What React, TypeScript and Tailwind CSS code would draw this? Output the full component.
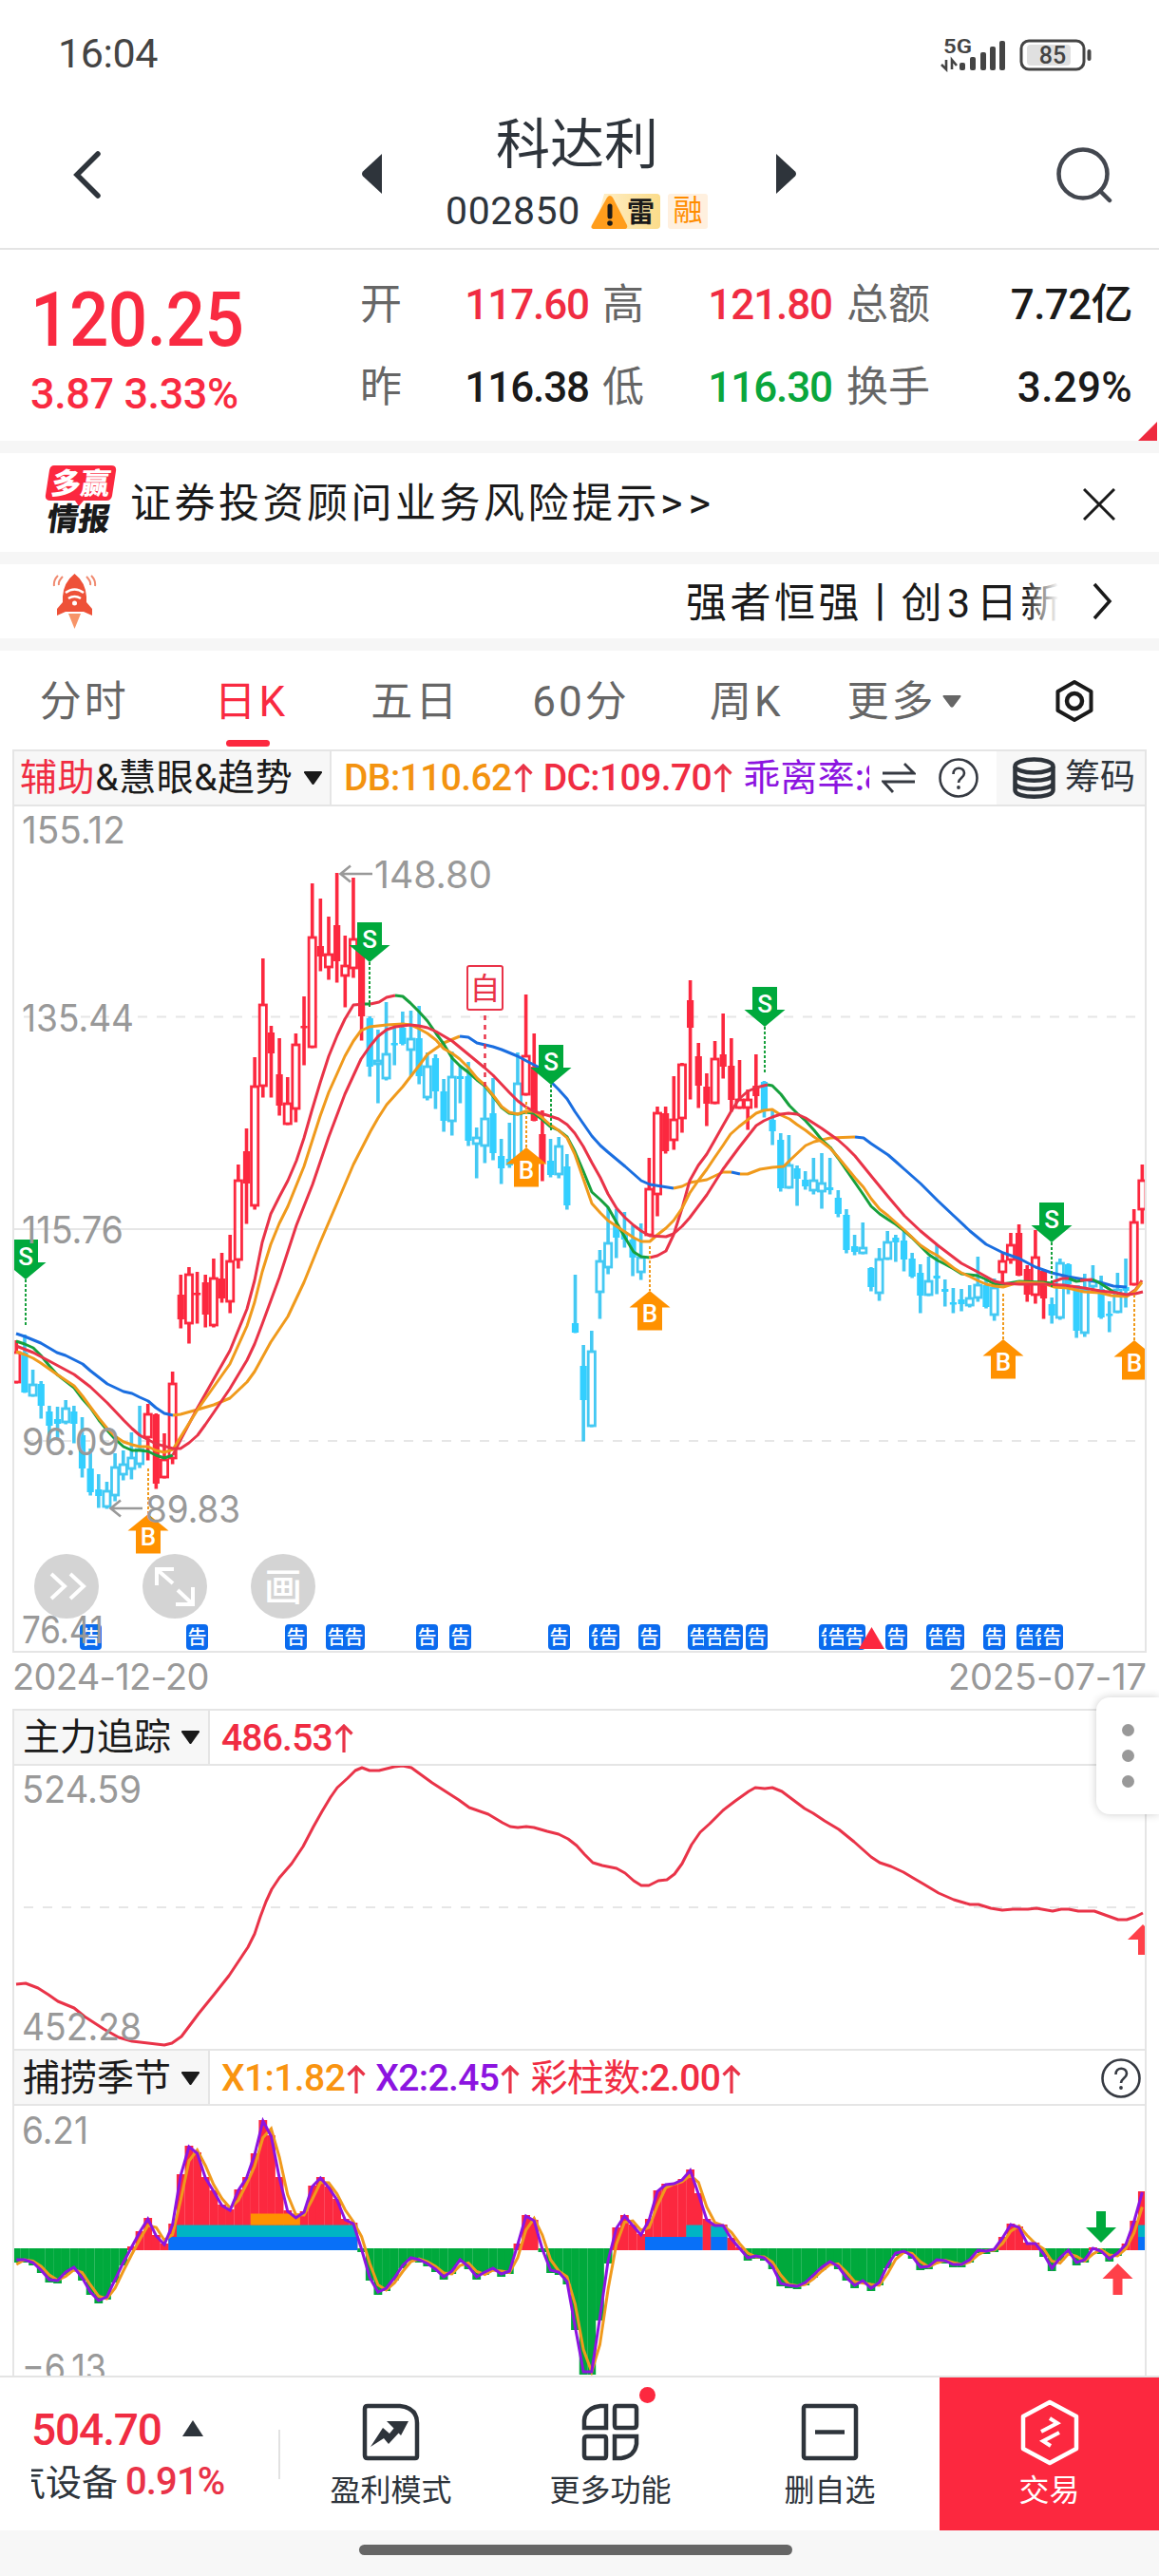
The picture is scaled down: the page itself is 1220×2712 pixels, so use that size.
import type { ReactNode } from "react";

const RED = "#fc283f";
const LINE_RED = "#e93348";
const GREEN = "#00a93c";
const LINE_GREEN = "#16a03c";
const ORANGE = "#ff9100";
const LINE_ORANGE = "#f09a1c";
const BLUE = "#1a6ee0";
const CYAN = "#33cfff";
const LINE_CYAN = "#44c9f3";
const GRID = "#e6e6e6";
const NUM_FONT = "Roboto, 'Noto Sans CJK SC', sans-serif";
const LABEL_FONT = "Inter, Roboto, sans-serif";
const CJK_FONT = "'Noto Sans CJK SC', sans-serif";

// R / r = red solid / hollow, C / c = cyan solid / hollow: [kind, high, top, bottom, low]
type Candle = [string, number, number, number, number];

const CANDLES: Candle[] = [
  ["r", 1411, 1423, 1456, 1456], ["C", 1405, 1424, 1466, 1466], ["c", 1442, 1457, 1470, 1470],
  ["C", 1454, 1457, 1480, 1493], ["C", 1480, 1486, 1501, 1516], ["C", 1481, 1494, 1499, 1515],
  ["c", 1474, 1482, 1498, 1499], ["C", 1480, 1486, 1499, 1519], ["C", 1492, 1511, 1546, 1555],
  ["C", 1525, 1546, 1571, 1574], ["C", 1552, 1568, 1575, 1587], ["c", 1560, 1569, 1587, 1588],
  ["c", 1530, 1544, 1575, 1580], ["c", 1527, 1541, 1553, 1558], ["c", 1508, 1534, 1547, 1557],
  ["c", 1480, 1525, 1542, 1545], ["r", 1478, 1488, 1514, 1537], ["R", 1488, 1489, 1562, 1567],
  ["r", 1509, 1536, 1556, 1556], ["r", 1444, 1456, 1536, 1541], ["R", 1342, 1363, 1389, 1398],
  ["r", 1334, 1341, 1394, 1414], ["R", 1339, 1361, 1363, 1393], ["R", 1342, 1350, 1384, 1397],
  ["r", 1325, 1345, 1396, 1397], ["R", 1319, 1346, 1367, 1371], ["r", 1300, 1327, 1371, 1382],
  ["r", 1226, 1242, 1327, 1335], ["R", 1188, 1212, 1246, 1288], ["r", 1113, 1143, 1270, 1273],
  ["r", 1009, 1057, 1144, 1155], ["R", 1080, 1087, 1109, 1155], ["R", 1093, 1131, 1164, 1174],
  ["r", 1134, 1161, 1184, 1184], ["r", 1088, 1099, 1168, 1181], ["R", 1049, 1080, 1082, 1121],
  ["r", 930, 986, 1103, 1103], ["R", 946, 996, 1007, 1022], ["r", 965, 1004, 1019, 1031],
  ["R", 919, 974, 1012, 1034], ["r", 985, 1016, 1028, 1060], ["r", 924, 988, 1020, 1029],
  ["R", 990, 1003, 1070, 1095], ["C", 1070, 1072, 1123, 1133], ["c", 1084, 1116, 1121, 1161],
  ["c", 1055, 1109, 1136, 1137], ["C", 1081, 1098, 1100, 1121], ["C", 1065, 1082, 1099, 1100],
  ["c", 1064, 1093, 1106, 1133], ["C", 1059, 1093, 1133, 1141], ["c", 1108, 1122, 1156, 1158],
  ["C", 1110, 1114, 1149, 1167], ["C", 1136, 1149, 1180, 1191], ["c", 1107, 1133, 1181, 1195],
  ["C", 1122, 1133, 1136, 1161], ["C", 1118, 1133, 1201, 1206], ["c", 1187, 1197, 1205, 1240],
  ["c", 1142, 1177, 1207, 1224], ["C", 1135, 1172, 1214, 1221], ["C", 1199, 1217, 1230, 1246],
  ["C", 1182, 1220, 1227, 1229], ["c", 1108, 1140, 1223, 1223], ["r", 1047, 1111, 1153, 1153],
  ["R", 1088, 1123, 1180, 1180], ["R", 1169, 1194, 1225, 1243], ["C", 1199, 1222, 1237, 1239],
  ["c", 1197, 1206, 1237, 1240], ["C", 1215, 1228, 1269, 1273], ["C", 1342, 1393, 1403, 1403],
  ["C", 1416, 1438, 1474, 1517], ["c", 1401, 1422, 1502, 1502], ["c", 1316, 1327, 1361, 1388],
  ["c", 1271, 1308, 1335, 1341], ["C", 1273, 1290, 1303, 1324], ["C", 1276, 1297, 1305, 1313],
  ["C", 1290, 1305, 1324, 1343], ["c", 1288, 1323, 1340, 1347], ["r", 1219, 1251, 1301, 1301],
  ["r", 1165, 1171, 1258, 1280], ["R", 1165, 1172, 1212, 1214], ["r", 1133, 1178, 1201, 1210],
  ["r", 1119, 1120, 1178, 1192], ["R", 1032, 1053, 1082, 1157], ["R", 1098, 1112, 1143, 1166],
  ["R", 1130, 1144, 1162, 1185], ["r", 1096, 1114, 1162, 1162], ["R", 1067, 1110, 1123, 1135],
  ["R", 1093, 1122, 1158, 1170], ["r", 1116, 1157, 1167, 1167], ["r", 1147, 1157, 1167, 1189],
  ["R", 1110, 1143, 1154, 1166], ["C", 1138, 1139, 1169, 1176], ["C", 1168, 1179, 1191, 1205],
  ["C", 1193, 1200, 1251, 1254], ["c", 1195, 1226, 1251, 1251], ["C", 1227, 1230, 1241, 1269],
  ["C", 1233, 1242, 1249, 1252], ["c", 1219, 1242, 1254, 1257], ["c", 1214, 1245, 1255, 1272],
  ["C", 1219, 1250, 1253, 1257], ["C", 1253, 1261, 1278, 1281], ["C", 1273, 1279, 1316, 1319],
  ["C", 1300, 1312, 1318, 1321], ["c", 1287, 1313, 1320, 1320], ["C", 1334, 1335, 1355, 1359],
  ["c", 1314, 1325, 1362, 1369], ["c", 1296, 1307, 1326, 1326], ["C", 1300, 1303, 1308, 1328],
  ["C", 1296, 1306, 1326, 1338], ["C", 1319, 1325, 1344, 1345], ["C", 1331, 1340, 1364, 1382],
  ["c", 1323, 1348, 1364, 1364], ["C", 1311, 1343, 1346, 1362], ["C", 1347, 1357, 1360, 1375],
  ["C", 1356, 1371, 1373, 1382], ["C", 1357, 1368, 1373, 1380], ["c", 1353, 1366, 1375, 1376],
  ["c", 1323, 1352, 1367, 1370], ["C", 1346, 1353, 1376, 1377], ["c", 1346, 1355, 1385, 1390],
  ["r", 1319, 1327, 1340, 1351], ["r", 1298, 1310, 1327, 1330], ["R", 1289, 1298, 1343, 1343],
  ["R", 1332, 1336, 1363, 1370], ["r", 1295, 1323, 1364, 1372], ["R", 1336, 1338, 1367, 1388],
  ["C", 1366, 1373, 1385, 1393], ["c", 1325, 1329, 1388, 1389], ["C", 1330, 1331, 1352, 1362],
  ["C", 1353, 1353, 1401, 1408], ["c", 1341, 1357, 1404, 1407], ["c", 1332, 1348, 1355, 1357],
  ["C", 1343, 1357, 1387, 1388], ["C", 1370, 1383, 1385, 1402], ["c", 1340, 1357, 1382, 1382],
  ["C", 1325, 1355, 1359, 1376], ["r", 1273, 1286, 1353, 1353], ["r", 1226, 1242, 1274, 1288],
];

const candleX = (i: number) => 17.3 + i * 8.65;

const TREND_LINES: { color: string; points: string }[] = [
  // slow trend
  { color: BLUE, points: "17,1404 26,1407 43,1414 60,1424 69,1427 87,1436 95,1443 113,1457 130,1465 139,1467 147,1471 156,1475 164,1482 173,1488 182,1490" },
  { color: LINE_ORANGE, points: "182,1490 190,1489 208,1484 225,1479 242,1472 260,1455 268,1444 285,1413 303,1386 320,1350 337,1308 355,1266 372,1226 390,1191 398,1177 407,1163 424,1144 441,1122 450,1110 467,1098 484,1091" },
  { color: BLUE, points: "484,1091 493,1092 502,1098 519,1102 528,1105 545,1112 558,1119 566,1123 580,1139 588,1147 597,1157 605,1170 614,1183 623,1196 632,1206 640,1213 658,1228 675,1243 684,1247 709,1251" },
  { color: LINE_ORANGE, points: "709,1251 718,1249 726,1245 744,1242 761,1234 770,1234" },
  { color: BLUE, points: "770,1234 779,1236" },
  { color: LINE_ORANGE, points: "779,1236 787,1236 800,1231 813,1229 825,1228 832,1221 848,1206 857,1202 874,1198 900,1197" },
  { color: BLUE, points: "900,1197 909,1198 917,1204 935,1216 943,1223 952,1231 969,1246 987,1264 1004,1280 1021,1296 1038,1310 1056,1319 1073,1325 1090,1334 1107,1340 1124,1344 1141,1347 1158,1350 1172,1354 1186,1355" },
  // fast trend
  { color: LINE_GREEN, points: "17,1412 26,1415 35,1419 43,1427 52,1438 60,1447 69,1454 78,1461 87,1473 95,1482 104,1495 113,1506 121,1515 130,1523 139,1527 147,1527 156,1528 164,1532 173,1535 182,1532" },
  { color: LINE_RED, points: "182,1532 190,1516 208,1482 225,1452 242,1422 260,1378 268,1348 276,1308 285,1278 294,1260 303,1243 312,1222 320,1198 328,1170 337,1140 346,1112 355,1090 363,1073 372,1058 384,1057" },
  { color: LINE_GREEN, points: "384,1057 390,1057" },
  { color: LINE_RED, points: "390,1057 399,1055 407,1050 416,1048" },
  { color: LINE_GREEN, points: "416,1048 424,1049 432,1056 441,1065 450,1075 459,1088 467,1099 476,1114 484,1122 493,1129 502,1137 510,1143 519,1154 528,1166 536,1172 545,1173 553,1171 562,1172 570,1178 579,1186 588,1190 597,1197 605,1212 614,1233 623,1255 632,1263 640,1271 649,1287 658,1303 667,1318 675,1323 684,1324" },
  { color: LINE_RED, points: "684,1324 692,1322 701,1317 709,1300 718,1272 726,1243 735,1227 744,1215 752,1201 761,1185 769,1171 778,1157 787,1149 796,1145 808,1142" },
  { color: LINE_GREEN, points: "808,1142 813,1143 822,1152 831,1164 839,1172 848,1180 857,1190 865,1200 874,1208 882,1219 891,1232 900,1245 909,1258 917,1270 926,1278 935,1284 943,1289 952,1296 960,1303 969,1312 978,1321 987,1327 995,1331 1004,1336 1012,1341 1029,1343 1038,1347 1047,1352 1056,1352 1073,1349 1098,1350 1107,1351" },
  { color: LINE_RED, points: "1107,1350 1118,1346 1125,1346" },
  { color: LINE_GREEN, points: "1125,1346 1133,1349 1141,1348" },
  { color: LINE_RED, points: "1137,1348 1150,1347" },
  { color: LINE_GREEN, points: "1150,1347 1158,1351 1172,1360 1186,1364" },
  { color: LINE_RED, points: "1186,1364 1195,1358 1202,1348" },
  // middle trend
  { color: LINE_ORANGE, points: "17,1423 26,1426 35,1430 43,1435 60,1447 78,1459 87,1470 95,1481 104,1493 113,1504 121,1512 130,1518 139,1521 147,1523 156,1523 164,1527 173,1529 182,1526 190,1513 208,1484 225,1460 242,1436 260,1396 268,1371 276,1339 285,1310 294,1288 303,1270 320,1228 328,1203 337,1175 346,1150 355,1130 363,1112 372,1096 380,1085 389,1081 407,1079 424,1078 432,1079 441,1083 450,1088 459,1095 467,1104 476,1109 484,1115 493,1124 502,1135 510,1142 519,1153 528,1165 536,1171 545,1173 553,1170 562,1170 570,1176 579,1184 588,1190 597,1198 605,1215 614,1241 623,1267 632,1277 640,1285 649,1291 658,1297 667,1303 675,1307 684,1307 692,1300 701,1293 709,1285 718,1272 726,1256 735,1243 744,1231 752,1219 761,1206 769,1194 778,1186 787,1179 796,1172 804,1169 813,1168 822,1174 831,1178 839,1184 848,1190 857,1197 865,1202 874,1209 882,1218 891,1229 900,1240 909,1250 917,1262 926,1273 935,1280 952,1295 969,1311 978,1317 987,1322 1004,1335 1012,1340 1021,1344 1029,1348 1038,1352 1047,1354 1056,1355 1072,1350 1098,1351 1110,1355 1124,1356 1141,1360 1158,1361 1170,1364 1186,1365 1195,1359 1202,1350" },
  { color: LINE_RED, points: "17,1417 35,1424 52,1433 78,1447 95,1460 113,1477 130,1495 139,1504 147,1511 164,1520 182,1525 190,1525 199,1519 208,1511 216,1500 225,1487 242,1462 260,1432 268,1415 276,1394 294,1345 312,1290 329,1247 346,1197 363,1152 380,1115 389,1102 398,1091 407,1084 416,1081 432,1079 441,1080 450,1082 459,1086 476,1096 493,1110 510,1124 519,1132 536,1150 545,1159 553,1165 562,1170 579,1175 588,1178 597,1184 605,1193 614,1207 623,1224 632,1240 640,1257 649,1272 658,1282 667,1290 675,1296 684,1301 701,1302 709,1299 718,1291 726,1282 744,1258 761,1231 778,1208 796,1185 804,1180 813,1176 822,1173 830,1172 839,1173 848,1177 865,1188 882,1200 891,1208 900,1217 917,1238 935,1260 952,1280 969,1296 987,1311 1012,1330 1029,1339 1047,1349 1056,1351 1073,1352 1098,1352 1120,1353 1141,1356 1158,1359 1175,1361 1186,1363 1195,1362 1203,1360" },
];

// [x, top, dotted line end]
const SELL_MARKS = [[27, 1305, 1395], [389, 971, 1060], [580, 1100, 1190], [805, 1039, 1129], [1107, 1266, 1355]];
// [x, tip, dotted line start]
const BUY_MARKS = [[156, 1594, 1546], [554, 1208, 1160], [684, 1359, 1312], [1056, 1410, 1362], [1194, 1411, 1363]];

const NOTICES = [84, 196, 300, 343, 361, 438, 473, 577, 620, 629, 672, 724, 741, 759, 785, 862, 870, 888, 932, 975, 992, 1035, 1070, 1087, 1096];

const FORCE_LINE =
  "17,2089 27,2088 40,2093 51,2100 61,2107 78,2114 89,2123 109,2136 125,2145 139,2149 156,2151 173,2153 181,2151 191,2144 209,2120 226,2099 241,2080 253,2062 261,2050 268,2036 274,2018 280,2002 286,1989 294,1977 307,1962 319,1944 330,1923 339,1907 348,1892 355,1882 366,1872 374,1864 381,1861 389,1864 399,1864 415,1860 424,1859 433,1861 444,1869 455,1877 469,1886 483,1895 494,1903 514,1910 529,1919 537,1923 545,1924 554,1923 562,1924 576,1928 588,1931 598,1936 607,1943 615,1952 624,1961 634,1964 649,1967 658,1972 667,1980 675,1985 683,1985 693,1980 702,1979 710,1973 718,1962 728,1942 737,1929 747,1920 761,1906 774,1896 788,1886 795,1882 805,1883 813,1882 823,1886 831,1892 839,1898 847,1904 856,1909 868,1917 883,1926 899,1939 917,1955 926,1961 938,1965 951,1971 961,1977 973,1984 988,1993 1004,2000 1021,2005 1030,2005 1043,2009 1055,2011 1066,2010 1082,2010 1091,2009 1108,2012 1117,2010 1125,2010 1135,2012 1152,2012 1163,2016 1177,2021 1186,2021 1195,2018 1203,2014";

const SEASON = [
  2379, 2379, 2382, 2390, 2400, 2401, 2392, 2387, 2398, 2413, 2422, 2418, 2400, 2382, 2366, 2350, 2336, 2354, 2363, 2342,
  2290, 2260, 2267, 2293, 2307, 2322, 2327, 2306, 2293, 2268, 2233, 2249, 2293, 2328, 2335, 2329, 2302, 2293, 2303, 2316,
  2337, 2341, 2368, 2398, 2413, 2409, 2398, 2385, 2377, 2379, 2383, 2389, 2397, 2391, 2379, 2386, 2397, 2392, 2388, 2394,
  2391, 2363, 2333, 2338, 2368, 2390, 2392, 2402, 2450, 2497, 2497, 2440, 2380, 2346, 2333, 2343, 2353, 2337, 2307, 2300,
  2299, 2295, 2285, 2310, 2337, 2343, 2343, 2357, 2367, 2377, 2375, 2377, 2386, 2404, 2406, 2407, 2403, 2395, 2387, 2381,
  2386, 2398, 2406, 2401, 2409, 2403, 2385, 2372, 2370, 2375, 2387, 2386, 2379, 2380, 2384, 2384, 2379, 2369, 2370, 2368,
  2356, 2342, 2345, 2362, 2362, 2373, 2388, 2377, 2369, 2382, 2379, 2367, 2370, 2378, 2372, 2363, 2339, 2308,
];
const ZERO = 2368;

// stacked colour bands: [from index, to index, y, height, colour]
const BANDS: [number, number, number, number, string][] = [
  [19, 41, 2355, 14, "#0870f8"],
  [20, 41, 2342.5, 12.5, "#00b4c4"],
  [29, 34, 2330.5, 12, ORANGE],
  [77, 83, 2355, 14, "#0870f8"],
  [82, 83, 2342.5, 12.5, "#00b4c4"],
  [85, 86, 2355, 14, "#0870f8"],
  [85, 86, 2343.5, 11.5, "#00b4c4"],
  [137, 137, 2355, 14, "#0870f8"],
  [137, 137, 2342.5, 12.5, "#00b4c4"],
];

const AxisLabel = ({ x, y, w, children }: { x: number; y: number; w: number; children: string }) => (
  <text x={x - 2} y={y} textLength={w + 4} lengthAdjust="spacingAndGlyphs" fontSize="39" fill="#999" fontFamily={LABEL_FONT}>
    {children}
  </text>
);

const UpArrow = () => (
  <svg className="mx-[2px] h-[30px] w-[20px] shrink-0" viewBox="0 0 20 30" fill="none" stroke={LINE_RED} strokeWidth="3.2">
    <path d="M10 30V2M1.5 10.5 10 2l8.500 8.500" />
  </svg>
);

const Help = () => (
  <svg className="h-[44px] w-[44px] shrink-0" viewBox="0 0 44 44" fill="none" stroke="#363a42" strokeWidth="2.6">
    <circle cx="22" cy="22" r="19.500" />
    <path d="M16.500 18c0-8.500 11.500-8 11.500-1 0 5-6 5-6 10" />
    <circle cx="22" cy="32" r="1.900" fill="#363a42" stroke="none" />
  </svg>
);

const Caret = () => (
  <svg className="h-[16px] w-[21px] shrink-0" viewBox="0 0 21 16">
    <path d="M2 1h17q1.500 0 1 1.500l-8.500 12q-1 1-2 0L1 2.500Q.500 1 2 1z" fill="#1a1a1a" />
  </svg>
);

const StatusBar = () => (
  <div className="flex h-[110px] items-center justify-between pr-[71px] pl-[61px] pt-[3px]">
    <span className="text-[43px] tracking-[-0.4px] text-[#444]">16:04</span>
    <svg className="h-[38px] w-[160px]" viewBox="990 36 160 38">
      <text x="994" y="54" fontSize="21" fontWeight="600" fill="#444" fontFamily={NUM_FONT} textLength="30" lengthAdjust="spacingAndGlyphs">5G</text>
      <path d="M997 61v10l-5-5M1003 71V61l5 6" fill="none" stroke="#444" strokeWidth="2.6" />
      {[[1011, 8], [1022, 14], [1033, 19], [1043, 25], [1053, 31]].map(([x, h]) => (
        <rect key={x} x={x} y={72 - h} width="6" height={h} rx="2" fill="#444" />
      ))}
      <rect x="1076" y="41" width="66" height="30" rx="8" fill="none" stroke="#444" strokeWidth="3" />
      <rect x="1082" y="45" width="46" height="22" rx="4" fill="#e0e0e0" />
      <rect x="1145.500" y="50" width="4" height="12" rx="2" fill="#444" />
      <text x="1109" y="65" fontSize="25" fontWeight="500" fill="#444" textAnchor="middle" fontFamily={NUM_FONT}>85</text>
    </svg>
  </div>
);

const Header = () => (
  <header className="flex h-[153px] items-center border-b-2 border-[#e4e4e4] pr-[47px] pl-[76px]">
    <svg className="mt-[-4px] h-[50px] w-[90px]" viewBox="0 0 90 50" fill="none" stroke="#2e343b" strokeWidth="5.500" strokeLinecap="round">
      <path d="M27 3 5 25l22 22" />
    </svg>
    <div className="ml-[214px] flex items-center">
      <svg className="mt-[-6px] mr-[67px] h-[42px] w-[22px]" viewBox="0 0 22 42">
        <path d="M22 0v42L2 23.500q-2-2.500 0-5z" fill="#2e343b" />
      </svg>
      <div className="flex w-[277px] flex-col items-center">
        <h1 className="text-[57px] leading-[66px] text-[#2e343b]">科达利</h1>
        <div className="mt-[8px] flex h-[57px] w-[277px] items-center gap-[8px]">
          <span className="w-[145px] text-[41px] tracking-[0.6px] text-[#2e343b]">002850</span>
          <svg className="h-[37px] w-[73px]" viewBox="0 0 73 37">
            <defs>
              <linearGradient id="thunder" x1="0" x2="1">
                <stop offset="0" stopColor="#fff0cc" />
                <stop offset="1" stopColor="#fbdc8a" />
              </linearGradient>
            </defs>
            <path d="M14 0h55q4 0 4 4v29q0 4-4 4H4z" fill="url(#thunder)" />
            <path d="M17 4q3-4 6 0l15 29q1 4-3 4H4q-5 0-3-4z" fill="#ff9d1c" />
            <path d="M20 13v11" stroke="#1a1a1a" strokeWidth="5" strokeLinecap="round" />
            <circle cx="20" cy="31" r="2.800" fill="#1a1a1a" />
            <text x="38" y="30" fontSize="29" fontWeight="700" fill="#1a1a1a" fontFamily={CJK_FONT}>雷</text>
          </svg>
          <span className="h-[37px] w-[42px] rounded-[3px] bg-[#fff0df] text-center text-[31px] leading-[36px] text-[#ff8c00]">融</span>
        </div>
      </div>
      <svg className="mt-[-6px] ml-[71px] h-[42px] w-[22px]" viewBox="0 0 22 42">
        <path d="M0 0v42l20-18.500q2-2.500 0-5z" fill="#2e343b" />
      </svg>
    </div>
    <svg className="mt-[-4px] ml-auto h-[60px] w-[62px]" viewBox="0 0 62 60" fill="none" stroke="#43474f" strokeWidth="4.500">
      <circle cx="29" cy="29" r="25.500" />
      <path d="m47 47 10 10" strokeLinecap="round" />
    </svg>
  </header>
);

const Quote = () => {
  const rows = [
    { a: "开", av: "117.60", ac: "text-[#f02c42]", b: "高", bv: "121.80", bc: "text-[#f02c42]", c: "总额", cv: "7.72亿" },
    { a: "昨", av: "116.38", ac: "text-[#1a1a1a]", b: "低", bv: "116.30", bc: "text-[#0aa63c]", c: "换手", cv: "3.29%" },
  ];
  return (
    <section className="relative flex h-[201px] pl-[32px] text-[44px] font-medium">
      <div className="w-[347px] pt-[30px] text-[#f92a41]">
        <div className="h-[88px] origin-left scale-x-[0.91] text-[80px] leading-[88px] tracking-[-0.5px]">120.25</div>
        <div className="mt-[9px] text-[45px] leading-[50px] tracking-[-0.4px]">3.87 3.33%</div>
      </div>
      <div className="flex flex-col pt-[14px]">
        {rows.map((r) => (
          <div key={r.a} className="flex h-[87px] items-center">
            <span className="w-[42px] font-normal text-[#666]">{r.a}</span>
            <span className={`w-[199px] text-right tracking-[-1.1px] ${r.ac}`}>{r.av}</span>
            <span className="ml-[14px] w-[42px] font-normal text-[#666]">{r.b}</span>
            <span className={`w-[200px] text-right tracking-[-1.1px] ${r.bc}`}>{r.bv}</span>
            <span className="ml-[15px] w-[90px] font-normal text-[#666]">{r.c}</span>
            <span className={`w-[211px] text-right text-[#1a1a1a] ${r.cv.endsWith("%") ? "tracking-[0.3px]" : "tracking-[-0.6px]"}`}>{r.cv}</span>
          </div>
        ))}
      </div>
      <svg className="absolute right-[2px] bottom-0 h-[20px] w-[20px]" viewBox="0 0 20 20">
        <path d="M20 0v20H0z" fill="#ee2a3e" />
      </svg>
    </section>
  );
};

const Banner = () => (
  <section className="flex h-[104px] items-center pr-[46px] pl-[47px]">
    <svg className="mt-[-7px] h-[74px] w-[77px]" viewBox="0 0 77 74">
      <path d="M10 1h60q6 0 5 6l-4 26q-1 5-6 5H41l-5 6-4-6H6q-6 0-5-6L5 6q1-5 5-5z" fill={RED} />
      <g fontFamily={CJK_FONT} fontWeight="900">
        <text x="6" y="31" fontSize="31" fill="#fff" transform="skewX(-8) translate(4 0)">多赢</text>
        <text x="6" y="69" fontSize="33" fill="#1a1a1a" transform="skewX(-8) translate(5 0)">情报</text>
      </g>
    </svg>
    <p className="ml-[13px] flex-1 pt-[1px] text-[43px] tracking-[3.5px] text-[#1a1a1a]">
      证券投资顾问业务风险提示<span className="text-[45px] tracking-[6px]">&gt;&gt;</span>
    </p>
    <svg className="mt-[3px] h-[34px] w-[34px]" viewBox="0 0 34 34" stroke="#1a1a1a" strokeWidth="3">
      <path d="M1 1l32 32M33 1 1 33" />
    </svg>
  </section>
);

const Alert = () => (
  <section className="flex h-[78px] items-center pr-[49px] pl-[55px]">
    <svg className="h-[58px] w-[47px]" viewBox="0 0 47 58">
      <g fill="none" stroke="#f0896f" strokeWidth="2">
        <path d="M6 2Q1 7 2 13M11 3q-5 5-4 9M41 2q5 5 4 11M36 3q5 5 4 9" />
      </g>
      <path d="M23.500 0Q35 9 36 24v6l6 7v7l-9-4H14l-9 4v-7l6-7v-6Q12 9 23.500 0z" fill="#ee5138" />
      <path d="M17 42h13l-6.500 16z" fill="#f79468" />
      <g fill="none" stroke="#fff" strokeWidth="2.600">
        <path d="M14 20q9.500-7 19 0M17 26q6.500-4 13 0" />
      </g>
      <circle cx="23.500" cy="31" r="2.500" fill="#fff" />
    </svg>
    <div className="relative ml-auto w-[392px] overflow-hidden pt-[4px] text-[43px] tracking-[3.5px] whitespace-nowrap text-[#1a1a1a]">
      强者恒强<span className="ml-[-3px]">丨</span><span className="ml-[-3px]">创</span><span className="mr-[3px] ml-[2px]">3</span>日新高
      <div className="absolute inset-y-0 right-0 w-[34px] bg-gradient-to-r from-white/0 to-white" />
    </div>
    <svg className="ml-[36px] h-[40px] w-[21px]" viewBox="0 0 21 40" fill="none" stroke="#1a1a1a" strokeWidth="3.500">
      <path d="m2 2 16 18L2 38" />
    </svg>
  </section>
);

const Tabs = () => (
  <nav className="flex h-[104px] text-[44px] tracking-[3px] text-[#666]">
    {["分时", "日K", "五日", "60分", "周K", "更多"].map((tab) => (
      <div key={tab} className="relative flex flex-1 items-center justify-center pt-[3px]">
        <span className={tab === "日K" ? "ml-[6px] text-[#f92a41]" : tab === "更多" ? "ml-[-14px]" : "ml-[3px]"}>{tab}</span>
        {tab === "更多" && (
          <svg className="ml-[6px] h-[13px] w-[20px]" viewBox="0 0 20 13">
            <path d="M1 0h18q1 1 0 2l-7.500 10q-1.500 1.500-3 0L1 2Q0 1 1 0z" fill="#666" />
          </svg>
        )}
        {tab === "日K" && <i className="absolute bottom-[3px] h-[7px] w-[46px] rounded-full bg-[#fc283f]" />}
      </div>
    ))}
    <div className="flex flex-1 items-center justify-center pt-[2px]">
      <svg className="mr-[4px] h-[46px] w-[42px]" viewBox="0 0 42 46" fill="none" stroke="#1a1a1a" strokeWidth="4">
        <path d="M21 3 38.500 13v20L21 43 3.500 33V13z" strokeLinejoin="round" />
        <circle cx="21" cy="23" r="8" strokeWidth="4.500" />
      </svg>
    </div>
  </nav>
);

const PanelHead = ({ name, width, children }: { name: ReactNode; width: string; children: ReactNode }) => (
  <div className="mx-[13px] flex h-[60px] border-x-2 border-y-2 border-[#e5e5e5] text-[39px]">
    <div className={`flex shrink-0 items-center justify-between border-r-2 border-[#e5e5e5] bg-[#f7f7f7] text-[#1a1a1a] ${width}`}>
      {name}
      <Caret />
    </div>
    {children}
  </div>
);

const MainChart = () => (
  <div className="mx-[13px] border-x-2 border-b-2 border-[#e5e5e5]">
    <svg className="block h-[889px] w-[1190px]" viewBox="15 849 1190 889">
      <g stroke={GRID} strokeWidth="2">
        <path d="M25 1070.500H1206M25 1517H1206" strokeDasharray="10 10" />
        <path d="M15 1294H1206" />
      </g>

      {CANDLES.map(([kind, high, top, bottom, low], i) => {
        const x = candleX(i);
        const red = kind.toLowerCase() === "r";
        const solid = kind === "R" || kind === "C";
        return (
          <g key={i} stroke={red ? RED : LINE_CYAN} strokeWidth="3.6">
            <path d={`M${x} ${high}V${top}M${x} ${bottom}V${low + 0.5}`} />
            {solid ? (
              <rect x={x - 3.6} y={top} width="7.2" height={Math.max(bottom - top, 2.5)} fill={red ? RED : CYAN} stroke="none" />
            ) : (
              <rect x={x - 3.6} y={top + 1} width="7.2" height={Math.max(bottom - top - 2, 2)} fill="#fff" strokeWidth="2.8" />
            )}
          </g>
        );
      })}

      {TREND_LINES.map((l) => (
        <polyline key={l.points} points={l.points} fill="none" stroke={l.color} strokeWidth="3" strokeLinejoin="round" />
      ))}

      {SELL_MARKS.map(([x, y, end]) => (
        <g key={x}>
          <path d={`M${x} ${y + 42}V${end}`} stroke={LINE_GREEN} strokeWidth="2" strokeDasharray="3 2" />
          <path d={`M${x - 13} ${y}h26v24h8.500L${x} ${y + 42}l-21.500-18h8.500z`} fill={GREEN} />
          <text x={x} y={y + 27} fontSize="26" fontWeight="500" fill="#fff" textAnchor="middle" fontFamily={NUM_FONT}>S</text>
        </g>
      ))}
      {BUY_MARKS.map(([x, y, start]) => (
        <g key={x}>
          <path d={`M${x} ${start}V${y}`} stroke={LINE_ORANGE} strokeWidth="2" strokeDasharray="3 2" />
          <path d={`M${x} ${y}l21.500 17.500h-8.500v24h-26v-24h-8.500z`} fill={ORANGE} />
          <text x={x} y={y + 33} fontSize="26" fontWeight="500" fill="#fff" textAnchor="middle" fontFamily={NUM_FONT}>B</text>
        </g>
      ))}

      <rect x="492" y="1017" width="37" height="46" rx="2" fill="#fff" stroke={LINE_RED} strokeWidth="2" />
      <text x="510.500" y="1052" fontSize="32" fill={LINE_RED} textAnchor="middle" fontFamily={CJK_FONT}>自</text>
      <path d="M510.500 1069V1144" stroke={LINE_RED} strokeWidth="2.500" strokeDasharray="5 5" />

      {/* floating tools */}
      <g fill="#d4d4d4">
        <circle cx="70" cy="1670" r="34" />
        <circle cx="184" cy="1670" r="34" />
        <circle cx="298" cy="1670" r="34" />
      </g>
      <g fill="none" stroke="#fff" strokeWidth="4">
        <path d="m54 1657 14 13-14 13M74 1657l14 13-14 13" />
        <path d="M165 1669v-17h18M166 1653l16 14M187 1674l16 15M203 1671v18h-18" />
      </g>
      <text x="298" y="1685" fontSize="40" fontWeight="500" fill="#fff" textAnchor="middle" fontFamily={CJK_FONT}>画</text>

      {NOTICES.map((x) => (
        <g key={x}>
          <rect x={x} y="1710" width="23" height="27" rx="4" fill="#0b6bee" />
          <text x={x + 11.5} y="1731" fontSize="20" fontWeight="500" fill="#fff" textAnchor="middle" fontFamily={CJK_FONT}>告</text>
        </g>
      ))}
      <path d="M917.500 1713 931 1736H904z" fill={RED} />

      <AxisLabel x={25} y={888} w={105}>155.12</AxisLabel>
      <AxisLabel x={25} y={1086} w={114}>135.44</AxisLabel>
      <AxisLabel x={25} y={1309} w={103}>115.76</AxisLabel>
      <AxisLabel x={25} y={1532} w={99}>96.09</AxisLabel>
      <AxisLabel x={25} y={1730} w={82}>76.41</AxisLabel>
      <AxisLabel x={396} y={935} w={120}>148.80</AxisLabel>
      <AxisLabel x={155} y={1603} w={96}>89.83</AxisLabel>
      <path d="M392 920H359M369 911.500l-10.500 8.500 10.500 8.500M150 1588h-33M127 1579.500l-10.500 8.500 10.500 8.500" fill="none" stroke="#999" strokeWidth="2.600" />
    </svg>
  </div>
);

const ForceChart = () => (
  <div className="mx-[13px] border-x-2 border-[#e5e5e5]">
    <svg className="block h-[298px] w-[1190px]" viewBox="15 1859 1190 298">
      <path d="M25 2008H1206" stroke={GRID} strokeWidth="2" strokeDasharray="10 10" />
      <polyline points={FORCE_LINE} fill="none" stroke={LINE_RED} strokeWidth="3" strokeLinejoin="round" />
      <path d="M1203 2026l16 16h-10v16h-11v-16h-11z" fill="#ff4049" />
      <AxisLabel x={25} y={1898} w={122}>524.59</AxisLabel>
      <AxisLabel x={25} y={2148} w={122}>452.28</AxisLabel>
    </svg>
  </div>
);

const SeasonChart = () => {
  const fast = SEASON.map((y, i) => `${candleX(i)},${y}`).join(" ");
  const slow = SEASON.map((y, i) => `${candleX(i)},${i ? (y + SEASON[i - 1]) / 2 : y + 5}`).join(" ");
  return (
    <div className="mx-[13px] border-x-2 border-[#e5e5e5]">
      <svg className="block h-[284px] w-[1190px]" viewBox="15 2217 1190 284">
        {SEASON.map((y, i) => {
          const up = y < ZERO;
          return (
            <rect
              key={i}
              x={candleX(i) - 4.4}
              y={up ? y - 1 : ZERO - 1}
              width="8.8"
              height={up ? ZERO - y + 2 : y - ZERO + 4}
              fill={up ? RED : GREEN}
            />
          );
        })}
        {BANDS.map(([from, to, y, h, color]) => (
          <rect key={`${from}-${y}`} x={candleX(from) - 4.3} y={y} width={(to - from + 1) * 8.65} height={h} fill={color} />
        ))}
        <polyline points={slow} fill="none" stroke={LINE_ORANGE} strokeWidth="3" />
        <polyline points={fast} fill="none" stroke="#8c14e0" strokeWidth="3" />
        <path d="M1154 2328h10v17h11l-16 16-16-16h11z" fill={GREEN} />
        <path d="M1176.500 2383l16 16h-11v17h-10v-17h-11z" fill="#ff4049" />
        <AxisLabel x={25} y={2257} w={66}>6.21</AxisLabel>
        <AxisLabel x={25} y={2507} w={85}>−6.13</AxisLabel>
      </svg>
    </div>
  );
};

const BottomBar = () => {
  const items = [
    {
      label: "盈利模式",
      icon: (
        <>
          <path d="M6 3h34q18 2 18 18v35q0 2-2 2H6q-3 0-3-3V6q0-3 3-3z" />
          <path d="M9 46 22 26l7 6 5-6 6 4-12 13-5-6z" fill="#2e343b" stroke="none" />
          <path d="M26 19h23l-8 15z" fill="#2e343b" stroke="none" />
        </>
      ),
    },
    {
      label: "更多功能",
      icon: (
        <path d="M20 3h6v23H3V18Q4 5 20 3zM37 3h18q3 0 3 3v17q0 3-3 3H37q-2 0-2-3V6q0-3 2-3zM6 35h18q2 0 2 3v17q0 3-2 3H6q-3 0-3-3V38q0-3 3-3zM35 35h23v8q-2 13-16 15h-7z" />
      ),
    },
    {
      label: "删自选",
      icon: (
        <>
          <rect x="3" y="3" width="55" height="55" rx="2" />
          <path d="M15 30.500h31" />
        </>
      ),
    },
  ];
  return (
    <footer className="flex h-[163px] border-t-2 border-[#e4e4e4] text-[#2e343b]">
      <div className="flex w-[296px] items-center">
        <div className="w-[293px] overflow-hidden pt-[5px] pl-[33px]">
          <div className="flex h-[57px] items-center gap-[21px] text-[46px] font-medium tracking-[-1.1px] text-[#f02c42]">
            504.70
            <svg className="mt-[-4px] h-[17px] w-[24px]" viewBox="0 0 24 17">
              <path d="M12 0 23 17H1z" fill="#2e343b" />
            </svg>
          </div>
          <div className="flex h-[56px] items-center overflow-hidden whitespace-nowrap">
            <span className="flex w-[91px] justify-end overflow-hidden text-[38px]">电气设备</span>
            <span className="ml-[8px] pb-[4px] text-[40px] font-medium tracking-[-0.9px] text-[#e93348]">0.91%</span>
          </div>
        </div>
        <i className="h-[52px] w-[2px] bg-[#e2e2e2]" />
      </div>
      {items.map((it) => (
        <div key={it.label} className="relative flex w-[231px] flex-col items-center pt-[27px] text-[32px] leading-[48px]">
          <svg className="h-[61px] w-[61px]" viewBox="0 0 61 61" fill="none" stroke="#2e343b" strokeWidth="4.500">
            {it.icon}
          </svg>
          <span className="mt-[7px]">{it.label}</span>
          {it.label === "更多功能" && <i className="absolute top-[10px] left-[146px] h-[17px] w-[17px] rounded-full bg-[#fc283f]" />}
        </div>
      ))}
      <div className="flex w-[231px] flex-col items-center bg-[#fc283f] pt-[23px] text-[32px] leading-[48px] text-white">
        <svg className="h-[70px] w-[62px]" viewBox="0 0 62 70" fill="none" stroke="#fff" strokeWidth="4.500">
          <path d="M31 3 59 18v34L31 67 3 52V18z" strokeLinejoin="round" />
          <path d="M22 34 39 25l-8-5M41 35l-17 9 8 5" strokeWidth="4" />
        </svg>
        <span className="mt-[2px]">交易</span>
      </div>
    </footer>
  );
};

const Gap = () => <div className="h-[13px] bg-[#f6f6f6]" />;

export default function App() {
  return (
    <main className="relative h-[2712px] w-[1220px] overflow-hidden bg-white font-[Roboto,'Noto_Sans_CJK_SC',sans-serif]">
      <StatusBar />
      <Header />
      <Quote />
      <Gap />
      <Banner />
      <Gap />
      <Alert />
      <Gap />
      <Tabs />

      <PanelHead
        width="w-[334px] pl-[6px] pr-[7px]"
        name={
          <span className="tracking-[0.6px] whitespace-nowrap">
            <span className="text-[#f02c42]">辅助</span>&amp;慧眼&amp;趋势
          </span>
        }
      >
        <div className="flex w-[566px] items-center overflow-hidden pl-[13px] font-medium tracking-[-0.6px] whitespace-nowrap">
          <span className="text-[#f39310]">DB:110.62</span>
          <UpArrow />
          <span className="ml-[9px] text-[#f02c42]">DC:109.70</span>
          <UpArrow />
          <span className="ml-[9px] text-[#8c14e0]"><span className="font-normal tracking-[0.2px]">乖离率</span>:8.45</span>
        </div>
        <div className="flex flex-1 items-center">
          <svg className="ml-[13px] h-[34px] w-[36px]" viewBox="0 0 36 34" fill="none" stroke="#363a42" strokeWidth="2.800">
            <path d="M1 12h33L24 2M35 21H2l10 11" />
          </svg>
          <span className="ml-[23px]"><Help /></span>
        </div>
        <div className="flex h-[56px] w-[156px] items-center bg-[#f7f7f7] pl-[17px] text-[37px] whitespace-nowrap text-[#2e343b]">
          <svg className="mr-[10px] h-[44px] w-[45px] shrink-0" viewBox="0 0 45 44" fill="none" stroke="#2e343b" strokeWidth="4.500">
            <ellipse cx="22.500" cy="9.500" rx="20" ry="7" />
            <path d="M2.500 10v25c0 9 40 9 40 0V10M2.500 18c0 9 40 9 40 0M2.500 27c0 9 40 9 40 0" />
          </svg>
          筹码
        </div>
      </PanelHead>
      <MainChart />
      <div className="flex h-[59px] items-center justify-between px-[13px] pb-[9px] font-[Inter,sans-serif] text-[38px] text-[#999]">
        <span className="tracking-[-0.7px]">2024-12-20</span>
        <span className="tracking-[-0.1px]">2025-07-17</span>
      </div>

      <PanelHead width="w-[206px] pl-[9px] pr-[8px]" name="主力追踪">
        <div className="flex items-center pt-[2px] pl-[12px] font-medium tracking-[-0.8px] text-[#f02c42]">
          486.53
          <UpArrow />
        </div>
      </PanelHead>
      <ForceChart />

      <PanelHead width="w-[206px] pt-[2px] pl-[9px] pr-[8px]" name="捕捞季节">
        <div className="flex flex-1 items-center pt-[3px] pl-[12px] font-medium tracking-[-0.6px]">
          <span className="text-[#f99410]">X1:1.82</span>
          <UpArrow />
          <span className="ml-[8px] text-[#8c14e0]">X2:2.45</span>
          <UpArrow />
          <span className="ml-[9px] text-[#f02c42]"><span className="font-normal">彩柱数</span>:2.00</span>
          <UpArrow />
        </div>
        <span className="mt-[7px] mr-[3px]"><Help /></span>
      </PanelHead>
      <SeasonChart />

      <BottomBar />
      <div className="flex h-[60px] justify-center bg-[#f7f7f7] pt-[15px]">
        <i className="mr-[8px] h-[11px] w-[456px] rounded-full bg-[#666]" />
      </div>

      {/* side drawer handle */}
      <div className="absolute top-[1787px] right-0 flex h-[123px] w-[66px] flex-col items-center justify-center gap-[14px] rounded-l-[14px] bg-white shadow-[0_0_10px_rgba(0,0,0,0.2)]">
        <i className="h-[13px] w-[13px] rounded-full bg-[#999]" />
        <i className="h-[13px] w-[13px] rounded-full bg-[#999]" />
        <i className="h-[13px] w-[13px] rounded-full bg-[#999]" />
      </div>
    </main>
  );
}
